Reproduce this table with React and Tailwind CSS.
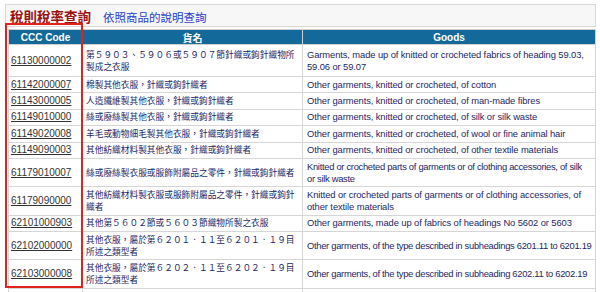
const rows = [
  {
    code: "61130000002",
    name: ["第５９０３、５９０６或５９０７節針織或鉤針織物所", "製成之衣服"],
    goods: ["Garments, made up of knitted or crocheted fabrics of heading 59.03,", "59.06 or 59.07"],
  },
  { code: "61142000007", name: ["棉製其他衣服，針織或鉤針織者"], goods: ["Other garments, knitted or crocheted, of cotton"] },
  { code: "61143000005", name: ["人造纖維製其他衣服，針織或鉤針織者"], goods: ["Other garments, knitted or crocheted, of man-made fibres"] },
  { code: "61149010000", name: ["絲或廢絲製其他衣服，針織或鉤針織者"], goods: ["Other garments, knitted or crocheted, of silk or silk waste"] },
  { code: "61149020008", name: ["羊毛或動物細毛製其他衣服，針織或鉤針織者"], goods: ["Other garments, knitted or crocheted, of wool or fine animal hair"] },
  { code: "61149090003", name: ["其他紡織材料製其他衣服，針織或鉤針織者"], goods: ["Other garments, knitted or crocheted, of other textile materials"] },
  {
    code: "61179010007",
    name: ["絲或廢絲製衣服或服飾附屬品之零件，針織或鉤針織者"],
    goods: ["Knitted or crocheted parts of garments or of clothing accessories, of silk", "or silk waste"],
    tight: true,
  },
  {
    code: "61179090000",
    name: ["其他紡織材料製衣服或服飾附屬品之零件，針織或鉤針", "織者"],
    goods: ["Knitted or crocheted parts of garments or of clothing accessories, of", "other textile materials"],
  },
  { code: "62101000903", name: ["其他第５６０２節或５６０３節織物所製之衣服"], goods: ["Other garments, made up of fabrics of headings No 5602 or 5603"] },
  {
    code: "62102000000",
    name: ["其他衣服，屬於第６２０１．１１至６２０１．１９目", "所述之類型者"],
    goods: ["Other garments, of the type described in subheadings 6201.11 to 6201.19"],
    tight: true,
  },
  {
    code: "62103000008",
    name: ["其他衣服，屬於第６２０２．１１至６２０２．１９目", "所述之類型者"],
    goods: ["Other garments, of the type described in subheading 6202.11 to 6202.19"],
    tight: true,
  },
];

export default function App() {

  return (

      <div className="relative w-[600px] h-[292px] overflow-hidden bg-white font-['Liberation_Sans','Noto_Sans_CJK_TC',sans-serif]">

        {/* title bar */}
        <div className="ml-[5px] mt-[4px] w-[591px] h-[23px] border border-[#d9d9d9] bg-[#f7f7f7] flex items-end pl-[4px] pb-[2px]">

          <span className="text-[13.5px] leading-[16px] font-bold text-[#9a1111] font-['Noto_Sans_CJK_TC',sans-serif]">
            稅則稅率查詢
          </span>

          <span className="ml-[12px] text-[11.5px] leading-[14px] text-[#1f3ccf] font-['Noto_Sans_CJK_TC',sans-serif]">
            依照商品的說明查詢
          </span>

        </div>

        <table className="ml-[8px] mt-[2px] w-[588px] table-fixed border-collapse">

          <colgroup>
            <col className="w-[74px]" />
            <col className="w-[220px]" />
            <col />
          </colgroup>

          <thead>
            <tr className="bg-[#12699a] text-white text-[10px] leading-[13px] font-bold">
              <th className="border border-[#d0d0d0] py-[0.5px]">CCC Code</th>
              <th className="border border-[#d0d0d0] py-[0.5px] font-['Noto_Sans_CJK_TC',sans-serif]">貨名</th>
              <th className="border border-[#d0d0d0] py-[0.5px]">Goods</th>
            </tr>
          </thead>

          <tbody>

            {rows.map((r, i) => (

                <tr key={r.code}>

                  <td className="border border-[#d6d6d6] pl-[2px] py-[1.7px] text-[10px] leading-[12px] text-[#333] underline underline-offset-[1px]">
                    {r.code}
                  </td>

                  <td className={"border border-[#d6d6d6] pl-[3px] pr-[2px] text-[8.7px] leading-[12px] text-[#1c1f66] font-['Noto_Sans_CJK_TC',sans-serif] " + (i === 0 ? "py-[3.5px]" : "py-[1.7px]")}>
                    {r.name.map((line) => (
                        <div key={line} className="whitespace-nowrap">{line}</div>
                    ))}
                  </td>

                  <td className={"border border-[#d6d6d6] pl-[4px] pr-[1px] py-[1.7px] text-[9.4px] leading-[12px] text-[#1c1f66] " + (r.tight ? "tracking-[-0.3px]" : "tracking-[-0.1px]")}>
                    {r.goods.map((line) => (
                        <div key={line} className="whitespace-nowrap">{line}</div>
                    ))}
                  </td>

                </tr>

            ))}

            <tr>
              <td className="border border-[#d6d6d6] h-[16px]"></td>
              <td className="border border-[#d6d6d6]"></td>
              <td className="border border-[#d6d6d6]"></td>
            </tr>

          </tbody>

        </table>

        {/* red highlight box */}
        <div className="absolute left-[5px] top-[23px] w-[78px] h-[265px] border-2 border-[#e4221c]"></div>

      </div>

  );

}
